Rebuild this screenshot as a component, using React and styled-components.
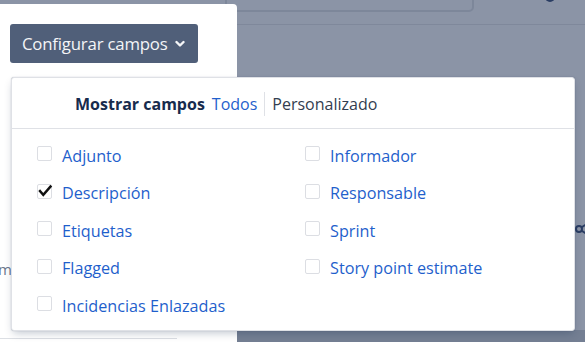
import styled, { createGlobalStyle } from 'styled-components';

const GlobalStyle = createGlobalStyle`
  html, body {
    margin: 0;
    padding: 0;
    background: #8b94a6;
    overflow: hidden;
  }
  body {
    font-family: "Open Sans", "Noto Sans", "Liberation Sans", sans-serif;
  }
`;

const Page = styled.div`
  width: 585px;
  height: 342px;
  display: flex;
  position: relative;
  overflow: hidden;
`;

const Sidebar = styled.aside`
  width: 237px;
  margin-top: 4px;
  background: #ffffff;
  border-top-right-radius: 4px;
  padding: 20px 0 0 10px;
  box-sizing: border-box;
  display: flex;
  flex-direction: column;
  position: relative;
  z-index: 1;
`;

const ConfigButton = styled.button`
  width: 188px;
  height: 39px;
  background: #505f79;
  color: #f4f5f7;
  border: none;
  border-radius: 3px;
  padding: 0 0 0 12px;
  display: flex;
  align-items: center;
  gap: 7px;
  font-family: inherit;
  font-size: 16.8px;
  letter-spacing: -0.2px;
  cursor: pointer;
`;

const ClippedWord = styled.span`
  margin-top: 196px;
  margin-left: -12px;
  font-size: 15px;
  color: #6b778c;
`;

const BottomRule = styled.div`
  margin-top: auto;
  margin-left: -10px;
  margin-bottom: 3px;
  width: 177px;
  height: 1px;
  background: #dcdfe4;
`;

const Main = styled.main`
  flex: 1;
  display: flex;
  flex-direction: column;
`;

const TopBar = styled.div`
  height: 24px;
  border-bottom: 1px solid #7f889b;
  display: flex;
  align-items: flex-start;
  margin-left: -12px;
`;

const SearchBox = styled.div`
  width: 245px;
  height: 16px;
  margin-top: -8px;
  border: 2px solid #7d879a;
  border-radius: 5px;
`;

const Avatar = styled.div`
  width: 10px;
  height: 10px;
  margin: -8px 0 0 71px;
  border-radius: 50%;
  background: #2a3d63;
`;

const Content = styled.div`
  flex: 1;
  display: flex;
  justify-content: flex-end;
  padding-top: 192px;
`;

const ShareIcon = styled.svg`
  width: 22px;
  height: 24px;
  margin-right: -11px;
`;

const BottomStrip = styled.div`
  height: 12px;
  background: #747f93;
`;

const Dropdown = styled.div`
  position: absolute;
  left: 11px;
  top: 77px;
  width: 564px;
  height: 254px;
  background: #ffffff;
  border: 1px solid #dfe1e6;
  border-radius: 3px;
  box-shadow: 0 4px 8px -2px rgba(9, 30, 66, 0.25), 0 0 1px rgba(9, 30, 66, 0.31);
  box-sizing: border-box;
  z-index: 2;
`;

const Header = styled.div`
  height: 51px;
  border-bottom: 1px solid #dfe1e6;
  display: flex;
  align-items: center;
  padding: 2px 0 0 63px;
  box-sizing: border-box;
  font-size: 16px;
`;

const HeaderTitle = styled.span`
  font-weight: 700;
  color: #172b4d;
  margin-right: 7px;
`;

const Tab = styled.span`
  color: ${({ $active }) => ($active ? '#1f5fcc' : '#333d4f')};
  padding: 0 ${({ $active }) => ($active ? '7px' : '0')} 0 ${({ $active }) => ($active ? '0' : '7px')};
  border-left: ${({ $active }) => ($active ? 'none' : '1px solid #dfe1e6')};
  line-height: 24px;
`;

const FieldGrid = styled.div`
  display: grid;
  grid-template-columns: 268px 1fr;
  grid-auto-flow: column;
  grid-template-rows: repeat(5, 37.5px);
  padding: 8px 0 0 25px;
`;

const Field = styled.label`
  display: flex;
  align-items: center;
  gap: 10px;
  font-size: 16.2px;
  color: #1f5fcc;
  cursor: pointer;
`;

const Box = styled.span`
  width: 15px;
  height: 15px;
  box-sizing: border-box;
  border: 1px solid #dcdee3;
  border-radius: 2px;
  margin-top: -4px;
  position: relative;
`;

const Check = styled.svg`
  width: 16px;
  height: 16px;
  position: absolute;
  left: -1px;
  top: -2px;
`;

const Chevron = () => (
  <svg width="10" height="8" viewBox="0 0 10 8">
    <path d="M1.5 2 L5 5.5 L8.5 2" fill="none" stroke="#f4f5f7" strokeWidth="2.4" strokeLinecap="round" strokeLinejoin="round" />
  </svg>
);

const leftFields = [
  { name: 'Adjunto' },
  { name: 'Descripción', checked: true },
  { name: 'Etiquetas' },
  { name: 'Flagged' },
  { name: 'Incidencias Enlazadas' },
];

const rightFields = [
  { name: 'Informador' },
  { name: 'Responsable' },
  { name: 'Sprint' },
  { name: 'Story point estimate' },
];

const FieldItem = ({ name, checked }) => (
  <Field>
    <Box>
      {checked && (
        <Check viewBox="0 0 16 16">
          <path d="M3 8 L6.3 11.8 L13.5 3.5" fill="none" stroke="#111" strokeWidth="2.4" strokeLinecap="square" />
        </Check>
      )}
    </Box>
    {name}
  </Field>
);

export default function App() {
  return (
    <>
      <GlobalStyle />
      <Page>
        <Sidebar>
          <ConfigButton>
            Configurar campos <Chevron />
          </ConfigButton>
          <ClippedWord>m</ClippedWord>
          <BottomRule />
        </Sidebar>
        <Main>
          <TopBar>
            <SearchBox />
            <Avatar />
          </TopBar>
          <Content>
            <ShareIcon viewBox="0 0 22 24">
              <path d="M16 5 L5 12 L16 19" fill="none" stroke="#2a3d63" strokeWidth="2" />
              <circle cx="5" cy="12" r="3" fill="#8b94a6" stroke="#2a3d63" strokeWidth="2" />
            </ShareIcon>
          </Content>
          <BottomStrip />
        </Main>
        <Dropdown>
          <Header>
            <HeaderTitle>Mostrar campos</HeaderTitle>
            <Tab $active>Todos</Tab>
            <Tab>Personalizado</Tab>
          </Header>
          <FieldGrid>
            {leftFields.map((f) => (
              <FieldItem key={f.name} {...f} />
            ))}
            {rightFields.map((f) => (
              <FieldItem key={f.name} {...f} />
            ))}
          </FieldGrid>
        </Dropdown>
      </Page>
    </>
  );
}
